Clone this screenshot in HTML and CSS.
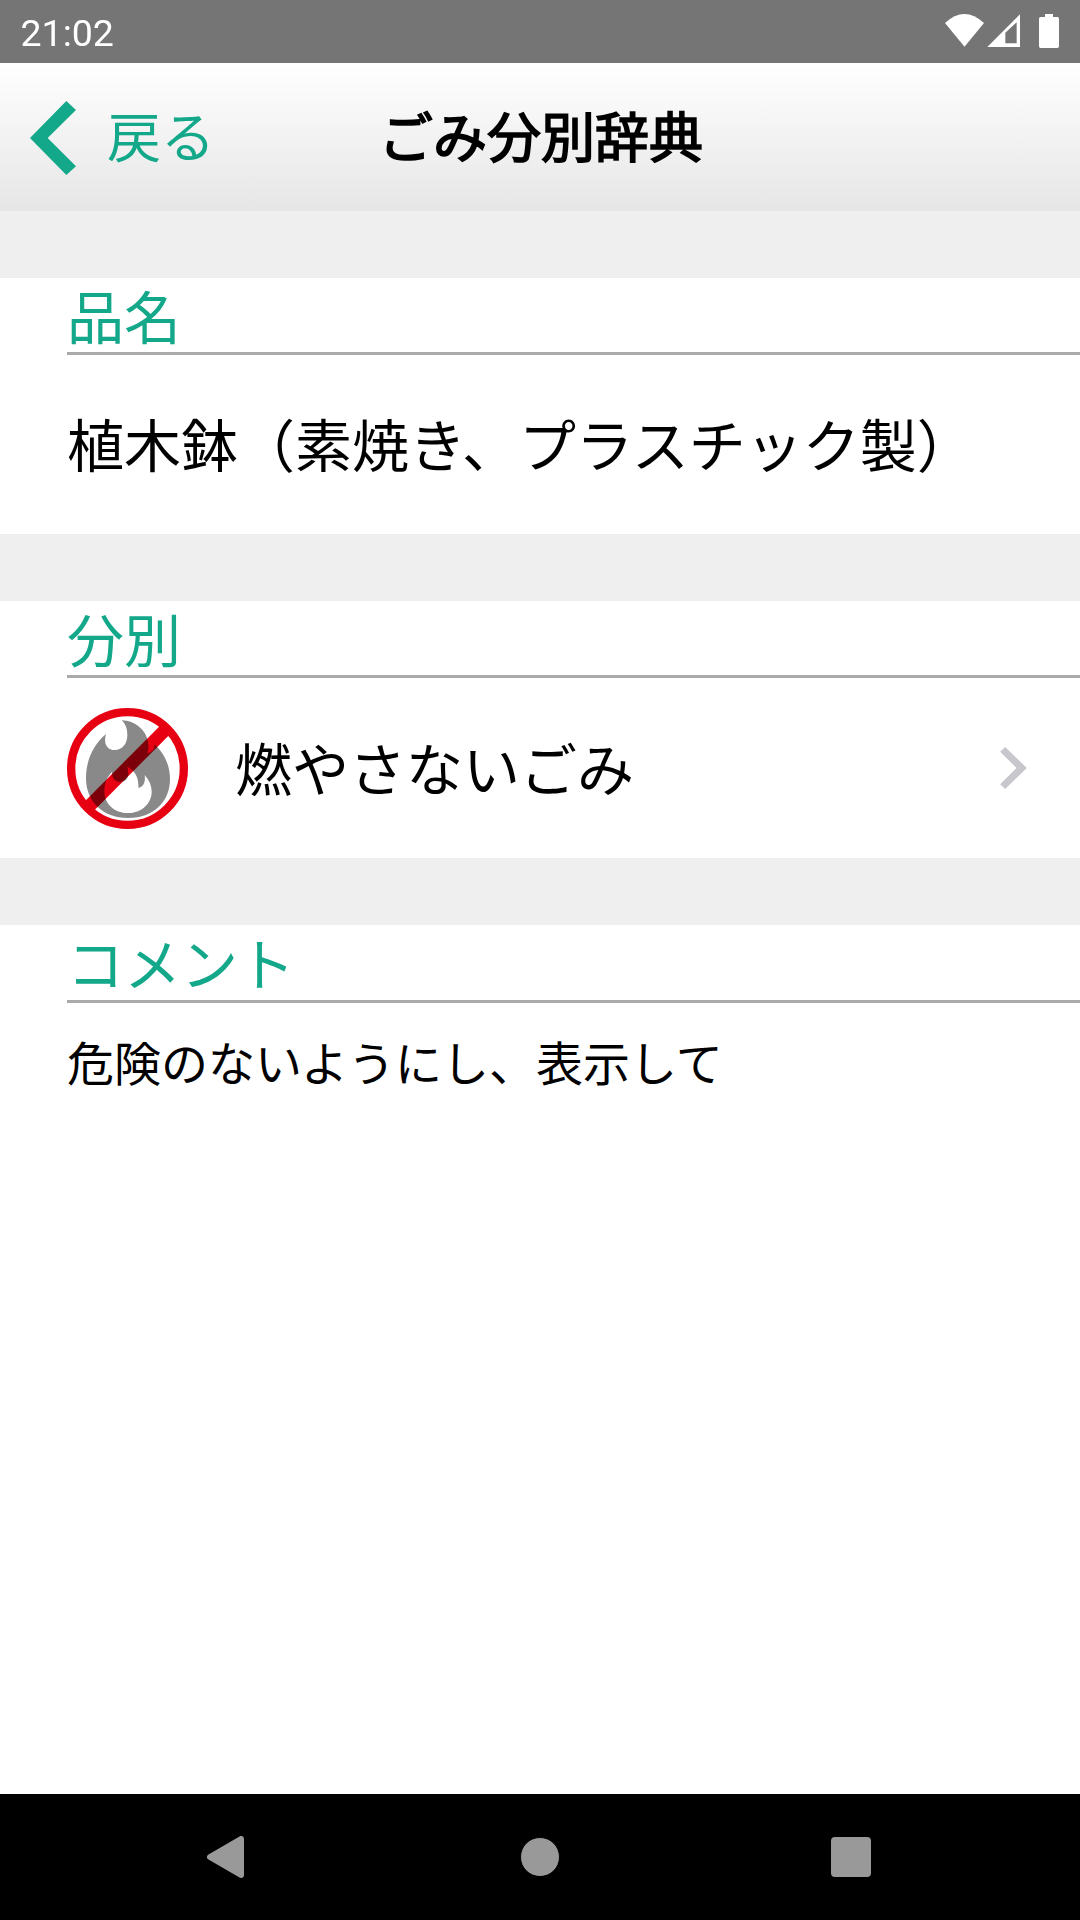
FILE: index.html
```html
<!DOCTYPE html>
<html lang="ja">
<head>
<meta charset="utf-8">
<title>ごみ分別辞典</title>
<link rel="stylesheet" href="styles.css">
</head>
<body>
<div class="status">
  <span class="time">21:02</span>
  <svg class="status-icons" viewBox="135 42 342 102" fill="#fff">
    <path d="M135 69Q193 15 252 69L193.500 140Z"/>
    <path fill-rule="evenodd" d="M262 141L360 43V141ZM316 98V130H350V67Z"/>
    <path d="M435 42H459V51H472Q477 51 477 56V139Q477 144 472 144H422Q417 144 417 139V56Q417 51 422 51H435Z"/>
  </svg>
</div>
<header class="header">
  <a class="back">
    <svg class="back-arrow" viewBox="90 303 138 222" fill="#14a88a"><path d="M199 303L228 330L143 414L228 499L199 525L90 414Z"/></svg>
    <span class="back-text">戻る</span>
  </a>
  <h1 class="title">ごみ分別辞典</h1>
</header>
<main class="content">
  <section class="card name">
    <h2 class="label">品名</h2>
    <p class="item"><span class="item-text">植木鉢（素焼き、プラスチック製）</span></p>
  </section>
  <section class="card sort">
    <h2 class="label">分別</h2>
    <div class="item">
      <svg class="sort-icon" viewBox="81 84 363 363">
        <circle cx="262.500" cy="265.500" r="169" fill="#fff"/>
        <path fill="#898989" fill-rule="evenodd" d="M245 121C285 122 318 150 324 185C327 203 325 212 322 219C338 216 344 205 343 193C373 220 390 255 390 298C390 362 345 414 264 414C188 414 138 365 138 295C138 240 160 195 198 162C190 190 200 210 224 210C248 210 262 190 262 165C262 147 257 132 245 121ZM262 260C282 270 297 290 295 323C311 321 317 305 314 285C328 300 335 318 335 335C335 370 305 399 264 399C222 399 193 370 193 335C193 312 200 292 216 276C216 295 225 306 240 306C255 306 265 296 265 283C265 275 264 267 262 260Z"/>
        <path class="ban-bar" d="M380 145L144 382" stroke="#e60012" stroke-width="39"/>
        <circle cx="262.500" cy="265.500" r="169" fill="none" stroke="#e60012" stroke-width="25"/>
      </svg>
      <span class="item-text sort-name">燃やさないごみ</span>
      <svg class="more" viewBox="180 258 80 126" fill="#c7c7cc"><path d="M180 272L195 258L260 321L195 384L180 370L229 321Z"/></svg>
    </div>
  </section>
  <section class="card last">
    <h2 class="label">コメント</h2>
    <p class="comment">危険のないようにし、表示して</p>
  </section>
</main>
<nav class="nav">
  <svg width="44" height="42" viewBox="0 0 44 42"><path d="M5 21L36 3V39Z" fill="#999" stroke="#999" stroke-width="6" stroke-linejoin="round"/></svg>
  <span class="nav-home"></span>
  <span class="nav-recent"></span>
</nav>
</body>
</html>
```
FILE: styles.css
```css
* { box-sizing: border-box; }
body {
  margin: 0;
  width: 1080px;
  height: 1920px;
  display: flex;
  flex-direction: column;
  background: #fff;
  color: #000;
  font-family: Roboto, "Noto Sans CJK JP", sans-serif;
}
h1, h2, p { margin: 0; font-weight: 400; }
svg { display: block; flex: none; }

.status {
  height: 63px;
  padding: 0 21px 0 20.5px;
  display: flex;
  justify-content: space-between;
  background: #757575;
  color: #fff;
}
.time { font-size: 37.5px; line-height: 66px; }
.status-icons { width: 114px; height: 34px; margin-top: 14px; }

.header {
  height: 148px;
  padding: 0 30px;
  display: grid;
  grid-template-columns: 1fr auto 1fr;
  align-items: center;
  background: linear-gradient(#fff, #e6e6e6);
}
.back {
  display: flex;
  align-items: center;
  gap: 31px;
  color: #14a88a;
  font-size: 54px;
  line-height: 74px;
}
.back-arrow { width: 46px; height: 74px; margin-top: 2px; }
.back-text { padding-top: 5px; }
.title {
  padding: 6px 0 0 2px;
  font-size: 54px;
  line-height: 74px;
  -webkit-text-stroke: 1.7px #000;
}

.content {
  flex: 1;
  display: flex;
  flex-direction: column;
  gap: 67px;
  padding-top: 67px;
  background: #efefef;
}
.card {
  padding-left: 67px;
  display: flex;
  flex-direction: column;
  background: #fff;
}
.name { height: 256px; }
.sort { height: 257px; }
.last { flex: 1; }
.label {
  flex: none;
  height: 77px;
  padding-top: 5px;
  border-bottom: 3px solid #aaa;
  color: #14a88a;
  font-size: 57px;
  line-height: 74px;
}
.last .label { height: 78px; }
.item {
  flex: 1;
  display: flex;
  align-items: center;
  font-size: 57px;
  line-height: 80px;
}
.item-text { padding-top: 7px; }
.sort-icon { width: 121px; height: 121px; }
.ban-bar { mix-blend-mode: multiply; }
.sort-name { flex: 1; margin-left: 47px; }
.more { width: 27px; height: 42px; margin-right: 53px; }
.comment { margin-top: 28px; font-size: 47px; line-height: 68px; }

.nav {
  height: 126px;
  padding: 0 209px 0 205px;
  display: flex;
  align-items: center;
  justify-content: space-between;
  background: #000;
}
.nav-home { width: 40px; height: 40px; border: 1px solid #000; border-radius: 50%; background: #999; }
.nav-recent { width: 40px; height: 40px; border-radius: 4px; background: #999; }
```
